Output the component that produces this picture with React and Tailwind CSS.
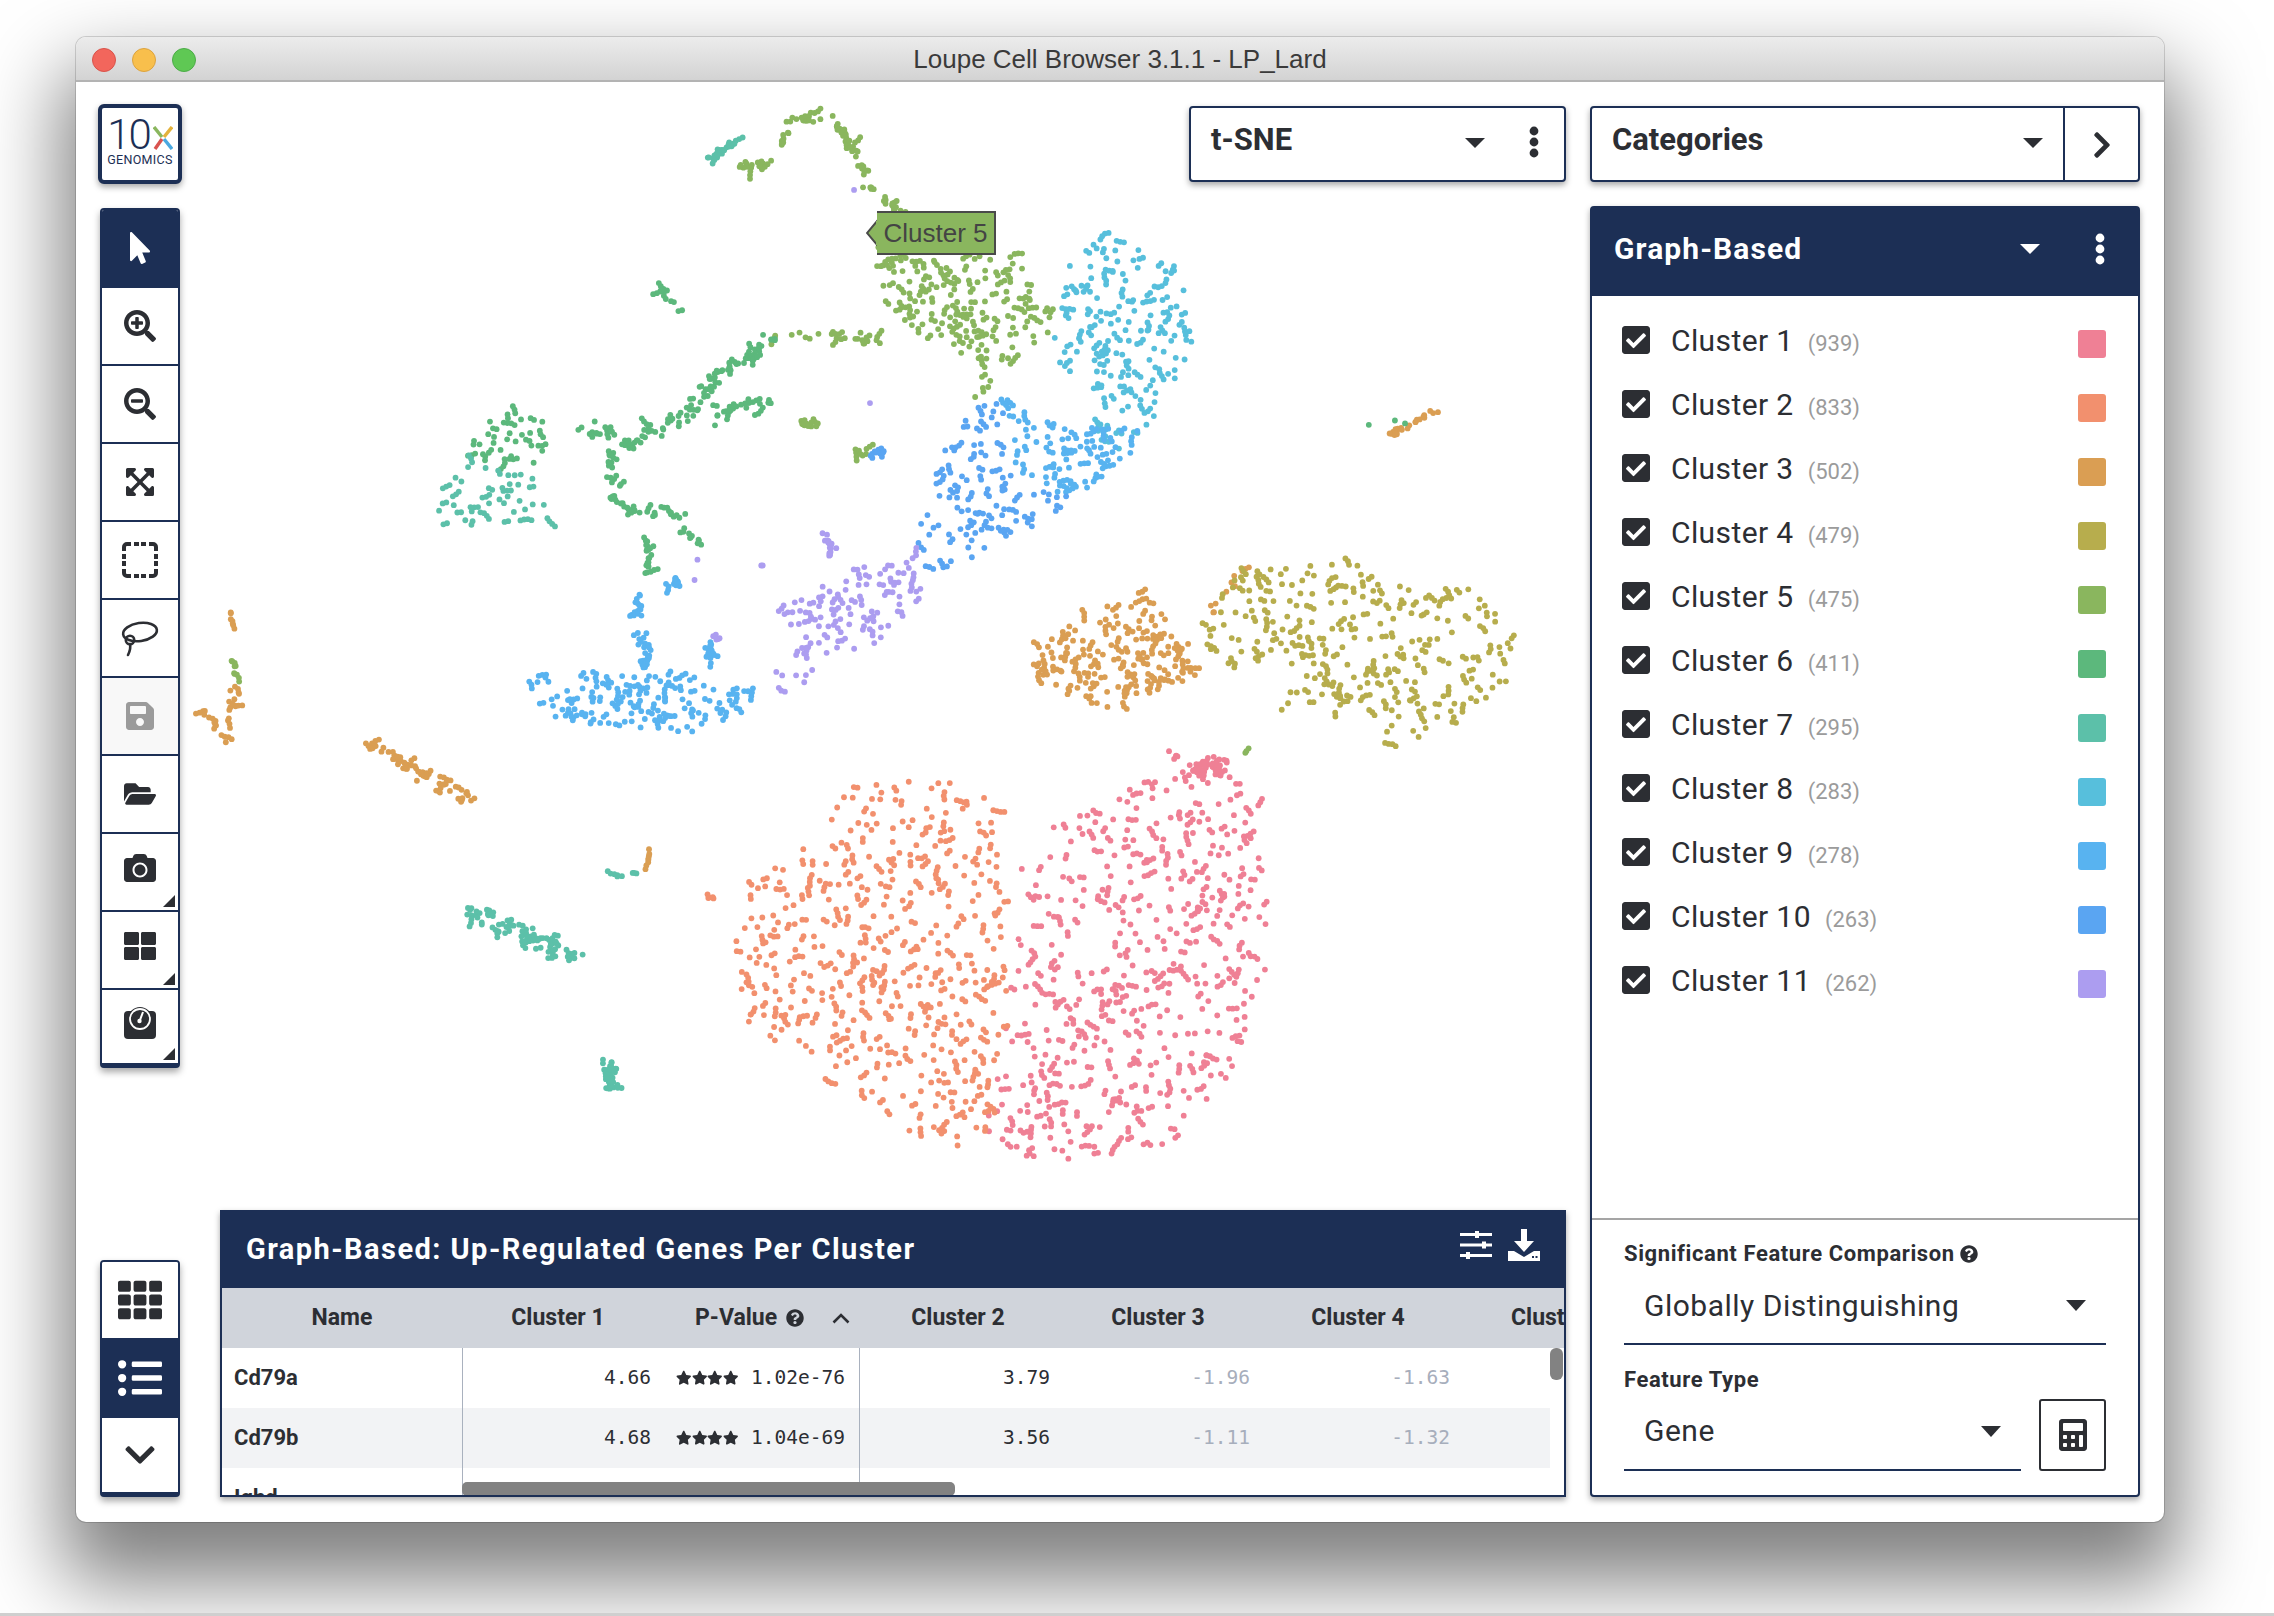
import React from 'react';
import {
  FaMousePointer, FaSearchPlus, FaSearchMinus, FaExpandArrowsAlt, FaSave, FaFolderOpen, FaCamera,
  FaThLarge, FaTh, FaListUl, FaChevronDown, FaChevronRight, FaCheckSquare, FaCalculator,
  FaQuestionCircle, FaStar,
} from 'react-icons/fa';

const C = {
  c1: '#ef8095', c2: '#f2906e', c3: '#da9e53', c4: '#b7ad4d', c5: '#8ab65e', c6: '#5cb87c',
  c7: '#5cc0a9', c8: '#57bfdc', c9: '#58b3f0', c10: '#5aa5f2', c11: '#ac9df0',
};

// seeded random so the plot is the same every load
let seed = 1234567;
const rnd = () => {
  seed = (seed + 0x6d2b79f5) | 0;
  let t = Math.imul(seed ^ (seed >>> 15), 1 | seed);
  t = (t + Math.imul(t ^ (t >>> 7), 61 | t)) ^ t;
  return ((t ^ (t >>> 14)) >>> 0) / 4294967296;
};
const gauss = () => (rnd() + rnd() + rnd() - 1.5) / 0.75;
const S = 1.45; // coordinates below were read off the shrunk picture
const DENSITY = 1.35;

const inside = (x, y, pts) => {
  let hit = false;
  for (let i = 0, j = pts.length - 1; i < pts.length; j = i++) {
    const [xi, yi] = pts[i];
    const [xj, yj] = pts[j];
    if (yi > y !== yj > y && x < ((xj - xi) * (y - yi)) / (yj - yi) + xi) hit = !hit;
  }
  return hit;
};

const dots = [];
const put = (x, y, color) => dots.push({ x: x * S, y: y * S, color });

// little chains of dots, that is how the cells lie in the reference
const chain = (x, y, color, step = 2.6) => {
  const n = 1 + Math.floor(rnd() * rnd() * 4);
  let a = rnd() * Math.PI * 2;
  let px = x;
  let py = y;
  for (let i = 0; i < n; i++) {
    put(px, py, color);
    a += (rnd() - 0.5) * 1.2;
    px += Math.cos(a) * step;
    py += Math.sin(a) * step;
  }
};

const poly = (color, n, pts, minDist = 5) => {
  const xs = pts.map((p) => p[0]);
  const ys = pts.map((p) => p[1]);
  const x0 = Math.min(...xs), x1 = Math.max(...xs), y0 = Math.min(...ys), y1 = Math.max(...ys);
  const target = Math.round(n * DENSITY);
  const gap = minDist * 0.85;
  const mine = [];
  let tries = 0;
  while (mine.length < target && tries < target * 80) {
    tries++;
    const x = x0 + rnd() * (x1 - x0);
    const y = y0 + rnd() * (y1 - y0);
    if (!inside(x, y, pts)) continue;
    if (mine.some((m) => (m[0] - x) ** 2 + (m[1] - y) ** 2 < gap * gap)) continue;
    mine.push([x, y]);
    chain(x, y, color);
  }
};

const line = (color, n, pts, spread, clumpy = true) => {
  const lens = pts.slice(1).map((p, i) => Math.hypot(p[0] - pts[i][0], p[1] - pts[i][1]));
  const total = lens.reduce((a, b) => a + b, 0);
  const target = Math.round(n * (clumpy ? DENSITY : 1));
  for (let k = 0; k < target; k++) {
    let d = rnd() * total;
    let i = 0;
    while (i < lens.length - 1 && d > lens[i]) d -= lens[i++];
    const t = lens[i] ? d / lens[i] : 0;
    const x = pts[i][0] + (pts[i + 1][0] - pts[i][0]) * t + gauss() * spread;
    const y = pts[i][1] + (pts[i + 1][1] - pts[i][1]) * t + gauss() * spread;
    if (clumpy) chain(x, y, color);
    else put(x, y, color);
  }
};

// cluster 1
poly(C.c1, 310, [[840, 526], [862, 545], [882, 568], [872, 586], [880, 655], [866, 689], [856, 733], [832, 761], [808, 793], [708, 802], [679, 781], [692, 724], [700, 655], [703, 597], [713, 565], [787, 540]]);
line(C.c1, 22, [[815, 530], [845, 527]], 4);
line(C.c1, 3, [[805, 517], [812, 522]], 0.8);
// cluster 2
poly(C.c2, 300, [[584, 538], [655, 538], [687, 551], [692, 597], [697, 655], [692, 724], [679, 781], [647, 799], [603, 765], [576, 754], [568, 728], [534, 719], [515, 710], [505, 660], [515, 611], [544, 593], [571, 572]]);
line(C.c2, 3, [[487, 618], [497, 621]], 0.8);
// cluster 3
poly(C.c3, 105, [[710, 453], [717, 444], [737, 432], [761, 418], [781, 405], [801, 418], [821, 446], [828, 464], [796, 480], [764, 488], [734, 480], [715, 467]], 3.6);
line(C.c3, 7, [[836, 420], [854, 392]], 3);
line(C.c3, 34, [[255, 512], [290, 535], [328, 552]], 3.5);
line(C.c3, 16, [[142, 488], [155, 512], [163, 475]], 2.5);
line(C.c3, 5, [[158, 418], [162, 434]], 1);
line(C.c3, 4, [[448, 584], [447, 600]], 0.6);
line(C.c3, 24, [[956, 301], [990, 283]], 1.5, false);
// cluster 4
poly(C.c4, 175, [[828, 432], [853, 391], [919, 380], [956, 391], [958, 402], [1010, 404], [1052, 434], [1040, 469], [1005, 501], [968, 519], [956, 513], [954, 490], [926, 494], [894, 487], [882, 492], [897, 464], [857, 453], [850, 467], [829, 448]], 4.6);
// cluster 5
line(C.c5, 42, [[543, 84], [556, 82], [572, 80], [587, 99], [595, 115], [600, 133], [614, 142], [632, 154]], 2.5);
poly(C.c5, 115, [[605, 170], [700, 175], [725, 215], [724, 230], [694, 251], [685, 267], [669, 280], [675, 258], [659, 239], [621, 223], [609, 204], [603, 191]], 4);
line(C.c5, 9, [[513, 114], [532, 111]], 2);
line(C.c5, 4, [[545, 88], [540, 100]], 1);
line(C.c5, 5, [[160, 455], [165, 470]], 1.2);
line(C.c5, 2, [[862, 516], [858, 520]], 0.6);
line(C.c5, 4, [[590, 312], [604, 306]], 2.5);
line(C.c5, 16, [[534, 233], [571, 230], [614, 237]], 4);
line(C.c5, 7, [[552, 293], [563, 293]], 1.2);
put(562, 291, C.c5); put(563, 294, C.c5); put(561, 289, C.c5); put(564, 292, C.c5);
// cluster 6
line(C.c6, 60, [[402, 294], [436, 304], [473, 285], [497, 258], [519, 244], [534, 233]], 6);
line(C.c6, 14, [[491, 290], [519, 278], [541, 281]], 3.5);
line(C.c6, 28, [[414, 297], [427, 336], [421, 344], [436, 352], [473, 354]], 3);
line(C.c6, 12, [[445, 366], [447, 395]], 1.4);
line(C.c6, 6, [[464, 368], [476, 369], [488, 380]], 1.5);
poly(C.c6, 24, [[331, 292], [365, 278], [384, 299], [368, 322], [316, 317]], 4.5);
line(C.c6, 6, [[455, 198], [469, 214]], 1.6);
put(944, 293, C.c6); put(962, 290, C.c6); put(969, 292, C.c6);
// cluster 7
poly(C.c7, 30, [[316, 317], [368, 322], [378, 359], [307, 363], [298, 347]], 4.5);
line(C.c7, 48, [[320, 625], [350, 640], [397, 660]], 5);
line(C.c7, 20, [[418, 735], [424, 752]], 3);
line(C.c7, 14, [[488, 111], [506, 99]], 1.6);
line(C.c7, 4, [[424, 605], [440, 601]], 0.8);
// cluster 8
poly(C.c8, 115, [[768, 158], [813, 180], [823, 237], [790, 300], [770, 312], [755, 300], [754, 264], [725, 255], [722, 240], [735, 200], [736, 172]], 3.8);
// cluster 9 and 10
poly(C.c9, 55, [[690, 273], [720, 290], [760, 295], [788, 297], [781, 315], [744, 342], [700, 335]], 4.4);
poly(C.c10, 70, [[630, 370], [645, 320], [668, 283], [690, 273], [700, 335], [744, 342], [690, 378], [640, 395]], 4.4);
poly(C.c9, 88, [[359, 467], [421, 462], [485, 467], [522, 474], [516, 490], [476, 506], [448, 507], [381, 494]], 3.6);
line(C.c9, 20, [[445, 402], [436, 432], [448, 448], [445, 460]], 3);
line(C.c9, 6, [[467, 400], [457, 409]], 2);
line(C.c9, 8, [[490, 437], [490, 462]], 1.2);
line(C.c10, 6, [[600, 315], [608, 311]], 1.5);
// cluster 11
poly(C.c11, 75, [[538, 418], [593, 391], [624, 389], [636, 379], [642, 391], [630, 428], [599, 446], [571, 451], [553, 474], [525, 476], [547, 448]], 3.6);
line(C.c11, 9, [[568, 363], [576, 391]], 2.5);
line(C.c11, 4, [[491, 438], [497, 441]], 1);
put(525, 390, C.c11); put(526, 390, C.c11); put(481, 386, C.c11); put(479, 400, C.c11); put(600, 278, C.c11); put(589, 131, C.c11);

const navy = 'border-[#1c2f55]';

const Corner = () => (
  <svg className="absolute right-[3px] bottom-[3px]" width="12" height="12" viewBox="0 0 12 12">
    <polygon points="12,0 12,12 0,12" fill="#2c2e33" />
  </svg>
);

const SelectIcon = () => (
  <svg width="36" height="36" viewBox="0 0 36 36" fill="none" stroke="#2c2e33" strokeWidth="4">
    <path d="M2 9V5a3 3 0 0 1 3-3h4M27 2h4a3 3 0 0 1 3 3v4M34 27v4a3 3 0 0 1-3 3h-4M9 34H5a3 3 0 0 1-3-3v-4" />
    <path d="M12 2h5M19 2h5M12 34h5M19 34h5M2 12v5M2 19v5M34 12v5M34 19v5" />
  </svg>
);

const LassoIcon = () => (
  <svg width="38" height="38" viewBox="0 0 38 38" fill="none" stroke="#2c2e33" strokeWidth="2.6" strokeLinecap="round">
    <ellipse cx="19" cy="13" rx="17" ry="9" transform="rotate(-8 19 13)" />
    <circle cx="9" cy="21" r="4.2" />
    <path d="M9 25c1 4 0 7-2 11" />
  </svg>
);

const GaugeIcon = () => (
  <svg width="32" height="32" viewBox="0 0 32 32">
    <rect y="4" width="32" height="28" rx="4" fill="#2c2e33" />
    <circle cx="16" cy="12" r="12" fill="#2c2e33" />
    <circle cx="16" cy="12" r="10" fill="#2c2e33" stroke="#fff" strokeWidth="1.8" />
    <path d="M19 5l-3 8" stroke="#fff" strokeWidth="2" />
    <circle cx="15.5" cy="14" r="2.2" fill="#fff" />
  </svg>
);

const Tool = ({ icon, active, disabled, corner, last, h = 'h-[78px]' }) => (
  <div
    className={`relative flex ${h} items-center justify-center ${last ? '' : 'border-b-2 border-[#1c2f55]'} ${
      active ? 'bg-[#1c2f55] text-white' : disabled ? 'bg-[#f8f8f8] text-[#9b9b9b]' : 'bg-white text-[#2c2e33]'
    }`}
  >
    <span className={corner ? 'mt-[-8px]' : ''}>{icon}</span>
    {corner && <Corner />}
  </div>
);

const Logo = () => (
  <div className={`relative flex h-[80px] w-[84px] flex-col items-center rounded-md border-4 ${navy} bg-white pt-[8px] shadow-[0_3px_6px_rgba(0,0,0,0.35)]`}>
    <div className="flex items-center text-[#1c2f55]">
      <span className="block text-[42px] font-light leading-[37px] tracking-[-2px]">10</span>
      <svg className="mt-[7px] ml-[3px]" width="20" height="24" viewBox="0 0 20 24" strokeWidth="3.4" fill="none">
        <path d="M1 1l8 10" stroke="#8ab65e" />
        <path d="M19 1l-8 10" stroke="#e3b23c" />
        <path d="M9 13l-7 10" stroke="#d9534f" />
        <path d="M11 13l8 10" stroke="#4aa8e0" />
      </svg>
    </div>
    <span className="block text-[12.5px] leading-[14px] tracking-[0.3px] text-[#1c2f55]">GENOMICS</span>
  </div>
);

const ThreeDots = ({ color }) => (
  <svg width="10" height="32" viewBox="0 0 10 32" fill={color}>
    <circle cx="5" cy="5" r="4.4" />
    <circle cx="5" cy="16" r="4.4" />
    <circle cx="5" cy="27" r="4.4" />
  </svg>
);

const Caret = ({ className, color = '#2c2e33', w = 20, h = 10 }) => (
  <svg className={className} width={w} height={h} viewBox="0 0 20 10" preserveAspectRatio="none">
    <polygon points="0,0 20,0 10,10" fill={color} />
  </svg>
);

const clusters = [
  ['Cluster 1', 939, C.c1], ['Cluster 2', 833, C.c2], ['Cluster 3', 502, C.c3], ['Cluster 4', 479, C.c4],
  ['Cluster 5', 475, C.c5], ['Cluster 6', 411, C.c6], ['Cluster 7', 295, C.c7], ['Cluster 8', 283, C.c8],
  ['Cluster 9', 278, C.c9], ['Cluster 10', 263, C.c10], ['Cluster 11', 262, C.c11],
];

const rows = [
  { name: 'Cd79a', c1: '4.66', p: '1.02e-76', c2: '3.79', c3: '-1.96', c4: '-1.63' },
  { name: 'Cd79b', c1: '4.68', p: '1.04e-69', c2: '3.56', c3: '-1.11', c4: '-1.32', alt: true },
  { name: 'Ighd', c1: '', p: '', c2: '', c3: '', c4: '' },
];

const Stars = () => (
  <span className="flex text-[#2c2e33]">
    <FaStar size={15.5} />
    <FaStar size={15.5} />
    <FaStar size={15.5} />
    <FaStar size={15.5} />
  </span>
);

const GeneTable = () => (
  <div className={`relative h-[287px] w-[1346px] overflow-hidden border-x-2 border-b-2 ${navy} bg-white shadow-[0_3px_6px_rgba(0,0,0,0.35)]`}>
    <div className="flex h-[78px] items-center justify-between bg-[#1c2f55] pr-[24px] pl-[24px]">
      <span className="text-[29px] font-bold leading-none tracking-[1.45px] text-white">Graph-Based: Up-Regulated Genes Per Cluster</span>
      <div className="flex items-center gap-[16px] pb-[8px]">
        <svg width="32" height="28" viewBox="0 0 32 28" fill="#fff">
          <rect y="2" width="32" height="3" />
          <rect x="15" y="0" width="4" height="7" />
          <rect y="12.5" width="32" height="3" />
          <rect x="22" y="10.5" width="4" height="7" />
          <rect y="23" width="32" height="3" />
          <rect x="6" y="21" width="4" height="7" />
        </svg>
        <svg width="32" height="32" viewBox="0 0 32 32" fill="#fff">
          <path d="M13 0h6v12h7l-10 11L6 12h7z" />
          <path d="M0 22h6l10 6 10-6h6v10H0z" />
          <rect x="24" y="27" width="2" height="2" fill="#1c2f55" />
          <rect x="27.5" y="27" width="2" height="2" fill="#1c2f55" />
        </svg>
      </div>
    </div>
    <div className="flex h-[60px] items-center whitespace-nowrap bg-[#d0d4db] text-[23px] font-bold text-[#2c2e33]">
      <div className="w-[240px] shrink-0 text-center">Name</div>
      <div className="w-[192px] shrink-0 text-center">Cluster 1</div>
      <div className="flex w-[207px] shrink-0 items-center pl-[41px]">
        <span>P-Value</span>
        <FaQuestionCircle size={18} className="ml-[9px]" />
        <svg className="ml-[28px]" width="18" height="11" viewBox="0 0 18 11" fill="none" stroke="#2c2e33" strokeWidth="2.6">
          <path d="M1.5 9.5L9 2l7.5 7.5" />
        </svg>
      </div>
      <div className="w-[194px] shrink-0 text-center">Cluster 2</div>
      <div className="w-[206px] shrink-0 text-center">Cluster 3</div>
      <div className="w-[194px] shrink-0 text-center">Cluster 4</div>
      <div className="shrink-0 pl-[56px]">Cluster 5</div>
    </div>
    {rows.map((r) => (
      <div key={r.name} className="flex h-[60px] font-['DejaVu_Sans_Mono',monospace] text-[19.5px] text-[#2c2e33]">
        <div className={`flex w-[241px] shrink-0 items-center border-r-[1.5px] border-[#a9b1be] pl-[12px] font-['Roboto',sans-serif] text-[22px] font-bold ${r.alt ? 'bg-[#f2f3f5]' : ''}`}>
          <span className="mt-[-2px]">{r.name}</span>
        </div>
        <div className={`flex w-[1087px] shrink-0 ${r.alt ? 'bg-[#f2f3f5]' : ''}`}>
          <div className="flex w-[397px] shrink-0 items-center justify-end border-r-[1.5px] border-[#a9b1be] pr-[14px]">
            {r.c1 && (
              <>
                <span>{r.c1}</span>
                <span className="ml-[25px] mr-[13px]"><Stars /></span>
                <span>{r.p}</span>
              </>
            )}
          </div>
          <div className="flex w-[190px] shrink-0 items-center justify-end">{r.c2}</div>
          <div className="flex w-[200px] shrink-0 items-center justify-end text-[#a7aebc]">{r.c3}</div>
          <div className="flex w-[200px] shrink-0 items-center justify-end text-[#a7aebc]">{r.c4}</div>
        </div>
      </div>
    ))}
    <div className="absolute top-[272px] left-[240px] h-[14px] w-[493px] rounded-[5px] bg-[#828282]" />
    <div className="absolute top-[138px] right-[1px] h-[32px] w-[13px] rounded-[6px] bg-[#828282]" />
  </div>
);

const RightPanel = () => (
  <div className="flex w-[550px] shrink-0 flex-col gap-[24px] pt-[24px] pb-[25px]">
    <div className={`flex h-[76px] items-stretch rounded-[4px] border-2 ${navy} bg-white shadow-[0_3px_6px_rgba(0,0,0,0.35)]`}>
      <div className="flex flex-1 items-start justify-between border-r-2 border-[#1c2f55] pt-[14px] pr-[20px] pl-[20px]">
        <span className="text-[31px] font-bold leading-[36px] text-[#2c2e33]">Categories</span>
        <Caret className="mt-[16px]" />
      </div>
      <div className="flex w-[73px] items-center justify-center pt-[2px] text-[#2c2e33]">
        <FaChevronRight size={30} />
      </div>
    </div>
    <div className={`flex flex-1 flex-col rounded-[4px] border-2 ${navy} bg-white shadow-[0_3px_6px_rgba(0,0,0,0.35)]`}>
      <div className="flex h-[88px] items-center justify-between bg-[#1c2f55] pr-[33px] pb-[6px] pl-[22px]">
        <span className="text-[30px] font-bold leading-none tracking-[1.1px] text-white">Graph-Based</span>
        <div className="flex items-center gap-[55px]">
          <Caret color="#fff" />
          <ThreeDots color="#fff" />
        </div>
      </div>
      <div className="flex flex-1 flex-col pt-[30px]">
        {clusters.map(([name, n, color]) => (
          <div key={name} className="flex h-[64px] items-start pr-[32px] pl-[28px]">
            <FaCheckSquare size={32} className="mt-[-2px] text-[#2c2e33]" />
            <span className="ml-[19px] mt-[-3px] text-[30px] leading-[36px] tracking-[0.4px] text-[#2c2e33]">{name}</span>
            <span className="ml-[14px] mt-[2px] text-[22px] leading-[32px] text-[#9b9b9b]">({n})</span>
            <span className="ml-auto mt-[4px] h-[28px] w-[28px] rounded-[3px]" style={{ backgroundColor: color }} />
          </div>
        ))}
      </div>
      <div className="h-[277px] border-t-2 border-[#a5a5a5] px-[32px] pt-[20px]">
        <div className="flex items-center text-[22px] font-bold leading-[28px] tracking-[0.6px] text-[#2c2e33]">
          Significant Feature Comparison
          <FaQuestionCircle size={18} className="ml-[5px]" />
        </div>
        <div className="flex h-[77px] items-center justify-between border-b-2 border-[#1c2f55] pr-[20px] pl-[20px]">
          <span className="text-[30px] leading-none tracking-[0.5px] text-[#2c2e33]">Globally Distinguishing</span>
          <Caret w={20} h={11} />
        </div>
        <div className="mt-[21px] text-[22px] font-bold leading-[28px] tracking-[0.6px] text-[#2c2e33]">Feature Type</div>
        <div className="mt-[5px] flex items-stretch gap-[18px]">
          <div className="flex h-[72px] flex-1 items-center justify-between border-b-2 border-[#1c2f55] pr-[20px] pb-[6px] pl-[20px]">
            <span className="text-[30px] leading-none tracking-[0.5px] text-[#2c2e33]">Gene</span>
            <Caret w={20} h={11} />
          </div>
          <div className="flex h-[72px] w-[67px] items-center justify-center rounded-[3px] border-2 border-[#2c2e33] text-[#2c2e33]">
            <FaCalculator size={32} />
          </div>
        </div>
      </div>
    </div>
  </div>
);

export default function App() {
  return (
    <div className="h-[1616px] overflow-hidden border-b-[3px] border-[#cfcfcf] bg-white pt-[37px] pl-[76px] font-['Roboto',sans-serif]">
      <div className="flex h-[1485px] w-[2088px] flex-col overflow-hidden rounded-[10px] bg-white shadow-[0_0_0_1px_rgba(0,0,0,0.15),0_46px_80px_14px_rgba(0,0,0,0.5)]">
        {/* title bar */}
        <div className="relative flex h-[45px] shrink-0 items-center justify-center border-b-2 border-[#b3b3b3] bg-gradient-to-b from-[#ececec] to-[#d3d3d3] pt-[2px]">
          <div className="absolute top-[11px] left-[16px] flex gap-[16px]">
            <span className="h-[24px] w-[24px] rounded-full border border-[#d9534a] bg-[#f2665c]" />
            <span className="h-[24px] w-[24px] rounded-full border border-[#dca33f] bg-[#f8bf4c]" />
            <span className="h-[24px] w-[24px] rounded-full border border-[#4cac48] bg-[#5fc854]" />
          </div>
          <span className="font-['Liberation_Sans',sans-serif] text-[26px] text-[#3a3a3a]">Loupe Cell Browser 3.1.1 - LP_Lard</span>
        </div>

        <div className="relative flex flex-1 overflow-hidden">
          {/* tSNE plot sits under everything else */}
          <svg className="absolute inset-0" width="2088" height="1440" viewBox="76 82 2088 1440">
            {dots.map((d, i) => (
              <circle key={i} cx={d.x} cy={d.y} r="2.9" fill={d.color} />
            ))}
          </svg>

          {/* left tools */}
          <div className="relative flex w-[144px] shrink-0 flex-col items-start justify-between pt-[22px] pb-[25px] pl-[22px]">
            <div className="flex flex-col items-center gap-[24px]">
              <Logo />
              <div className={`w-[80px] overflow-hidden rounded-[4px] border-2 border-b-[5px] ${navy} bg-white shadow-[0_4px_7px_rgba(0,0,0,0.35)]`}>
                <Tool active icon={<FaMousePointer size={32} />} />
                <Tool icon={<FaSearchPlus size={32} />} />
                <Tool icon={<FaSearchMinus size={32} />} />
                <Tool icon={<FaExpandArrowsAlt size={32} />} />
                <Tool icon={<SelectIcon />} />
                <Tool icon={<LassoIcon />} />
                <Tool disabled icon={<FaSave size={32} />} />
                <Tool icon={<FaFolderOpen size={32} />} />
                <Tool corner icon={<FaCamera size={32} />} />
                <Tool corner icon={<FaThLarge size={32} />} />
                <Tool corner last h="h-[73px]" icon={<GaugeIcon />} />
              </div>
            </div>
            <div className={`ml-[2px] w-[80px] overflow-hidden rounded-[4px] border-2 border-b-[5px] ${navy} bg-white shadow-[0_4px_7px_rgba(0,0,0,0.35)]`}>
              <Tool last h="h-[76px]" icon={<FaTh size={44} />} />
              <Tool last active h="h-[80px]" icon={<FaListUl size={44} />} />
              <Tool last h="h-[74px]" icon={<FaChevronDown size={34} />} />
            </div>
          </div>

          {/* plot column */}
          <div className="relative flex w-[1346px] shrink-0 flex-col items-end justify-between pt-[24px] pb-[25px]">
            <div className={`flex h-[76px] w-[377px] items-start rounded-[4px] border-2 ${navy} bg-white pt-[14px] pr-[25px] pl-[20px] shadow-[0_3px_6px_rgba(0,0,0,0.35)]`}>
              <span className="text-[31px] font-bold leading-[36px] text-[#2c2e33]">t-SNE</span>
              <Caret className="mt-[16px] ml-auto mr-[44px]" />
              <span className="mt-[4px]"><ThreeDots color="#2c2e33" /></span>
            </div>
            <GeneTable />
          </div>

          <div className="w-[24px] shrink-0" />
          <RightPanel />

          {/* hover tooltip on the plot */}
          <div className="absolute top-[129px] left-[790px] flex">
            <svg width="12" height="44" viewBox="0 0 12 44" className="mr-[-1px]">
              <polygon points="12,9 1,22 12,35" fill="#8ab65e" stroke="#4a4a4a" strokeWidth="2" />
              <rect x="10" y="10" width="2" height="24" fill="#8ab65e" />
            </svg>
            <div className="flex h-[44px] w-[119px] items-center justify-center border-2 border-l-0 border-[#4a4a4a] bg-[#8ab65e] font-['Liberation_Sans',sans-serif] text-[26px] text-[#444]">
              Cluster 5
            </div>
          </div>
        </div>
      </div>
    </div>
  );
}
